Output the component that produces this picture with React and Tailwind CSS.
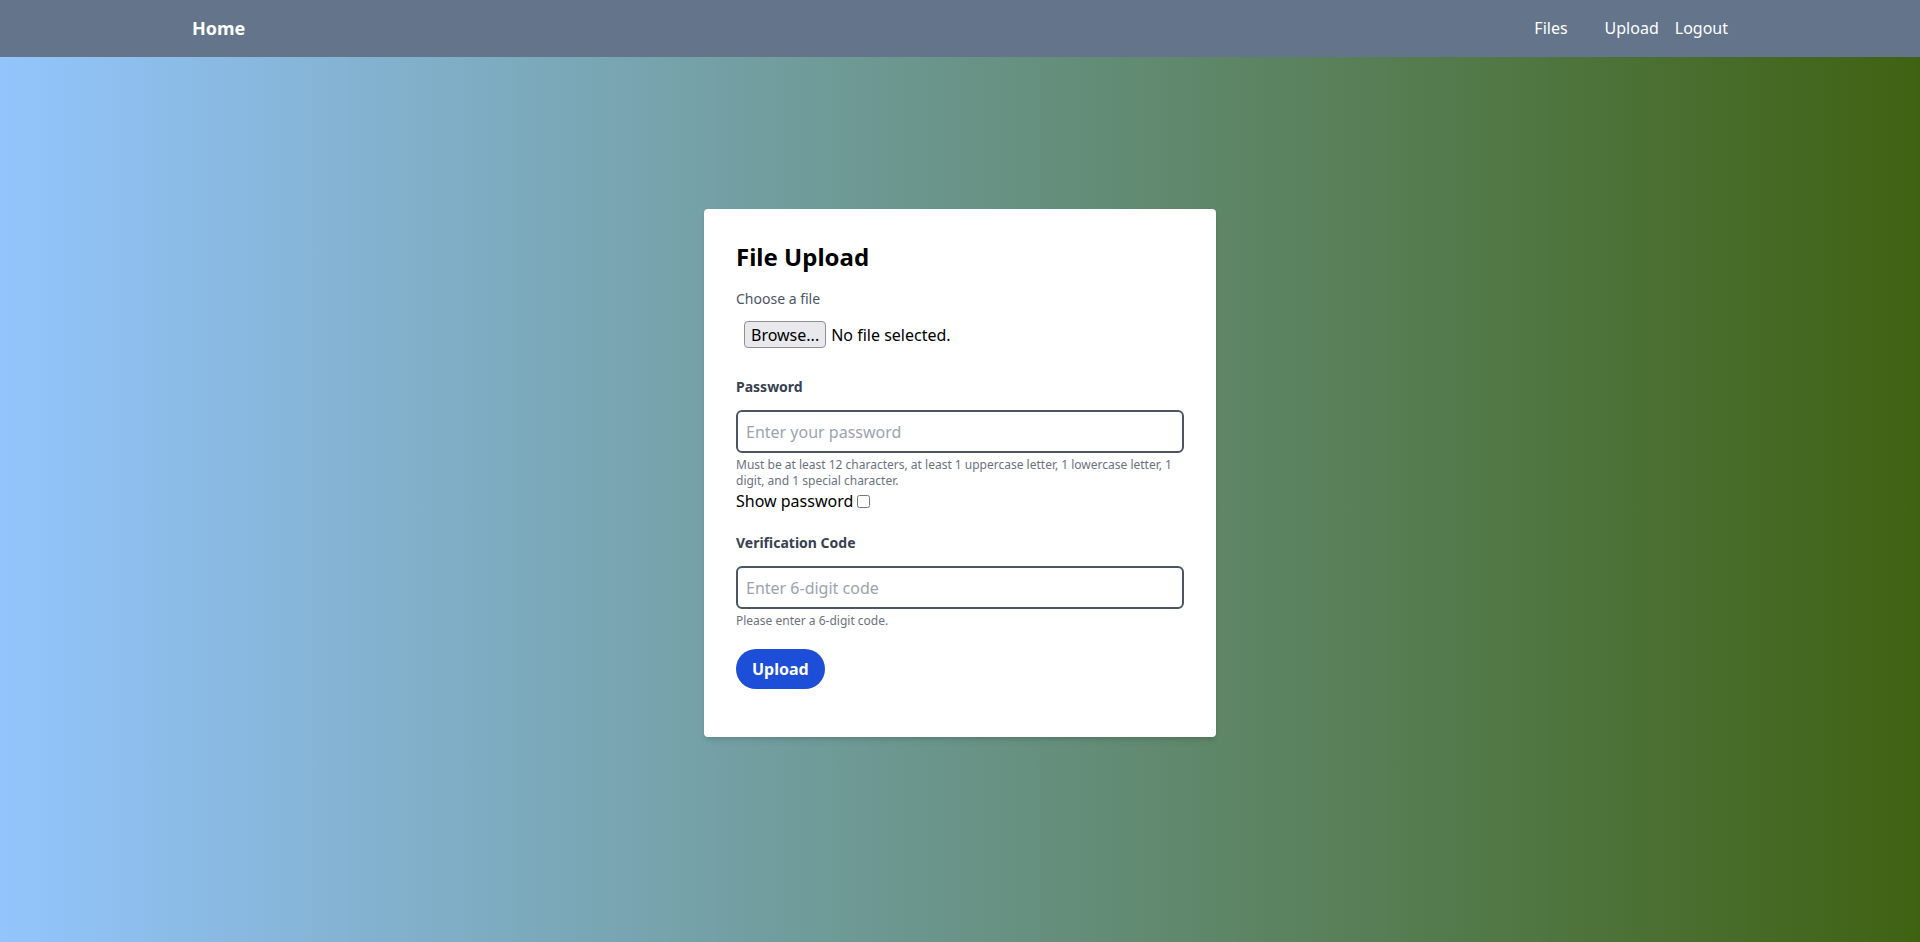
import { useState } from 'react';

function NavBar() {
    return (
        <nav className="h-[57px] bg-[#64748b] text-white">
            <div className="max-w-[1536px] mx-auto h-full flex items-center justify-between pb-0.5">
                <a href="#" className="text-lg font-bold">Home</a>
                <div className="flex items-center gap-4 text-base">
                    <a href="#" className="mr-[21px]">Files</a>
                    <a href="#">Upload</a>
                    <a href="#">Logout</a>
                </div>
            </div>
        </nav>
    );
}

function UploadForm() {
    const [showPassword, setShowPassword] = useState(false);

    return (
        <div className="w-[512px] bg-white rounded shadow-md p-8 pb-12">
            <h2 className="text-2xl font-bold text-black mb-4">File Upload</h2>

            <label className="block text-sm text-[#4b5563] mb-1">Choose a file</label>
            <div className="flex items-center p-2 h-[43px]">
                <span className="h-[27px] px-[6px] flex items-center border border-[#8f8f9d] bg-[#e9e9ed] rounded text-base text-black">
                    Browse...
                </span>
                <span className="ml-[5px] text-base text-black">No file selected.</span>
            </div>

            <label className="block text-sm font-bold text-[#374151] mt-[21px] mb-[13px]">Password</label>
            <input
                type={showPassword ? 'text' : 'password'}
                placeholder="Enter your password"
                className="w-full h-[43px] border-2 border-[#4b5563] rounded-md px-2 text-base text-black placeholder:text-[#9ca3af] outline-none"
            />
            <p className="mt-1 text-xs text-[#6b7280]">
                Must be at least 12 characters, at least 1 uppercase letter, 1 lowercase letter, 1 digit, and 1 special character.
            </p>
            <label className="flex items-center text-base text-black h-6">
                Show password
                <input
                    type="checkbox"
                    checked={showPassword}
                    onChange={() => setShowPassword(!showPassword)}
                    className="ml-1 w-[13px] h-[13px]"
                />
            </label>

            <label className="block text-sm font-bold text-[#374151] mt-5 mb-[13px]">Verification Code</label>
            <input
                type="text"
                placeholder="Enter 6-digit code"
                className="w-full h-[43px] border-2 border-[#4b5563] rounded-md px-2 text-base text-black placeholder:text-[#9ca3af] outline-none"
            />
            <p className="mt-1 text-xs text-[#6b7280]">Please enter a 6-digit code.</p>

            <button className="mt-5 h-10 px-4 rounded-full bg-[#1d4ed8] text-white font-bold text-base">
                Upload
            </button>
        </div>
    );
}

export default function App() {
    return (
        <div className="min-h-screen flex flex-col bg-linear-to-r/srgb from-[#93c5fd] to-[#3f6212] font-['Noto_Sans',sans-serif]">
            <NavBar />
            <main className="flex-1 flex justify-center items-start pt-[152px]">
                <UploadForm />
            </main>
        </div>
    );
}
